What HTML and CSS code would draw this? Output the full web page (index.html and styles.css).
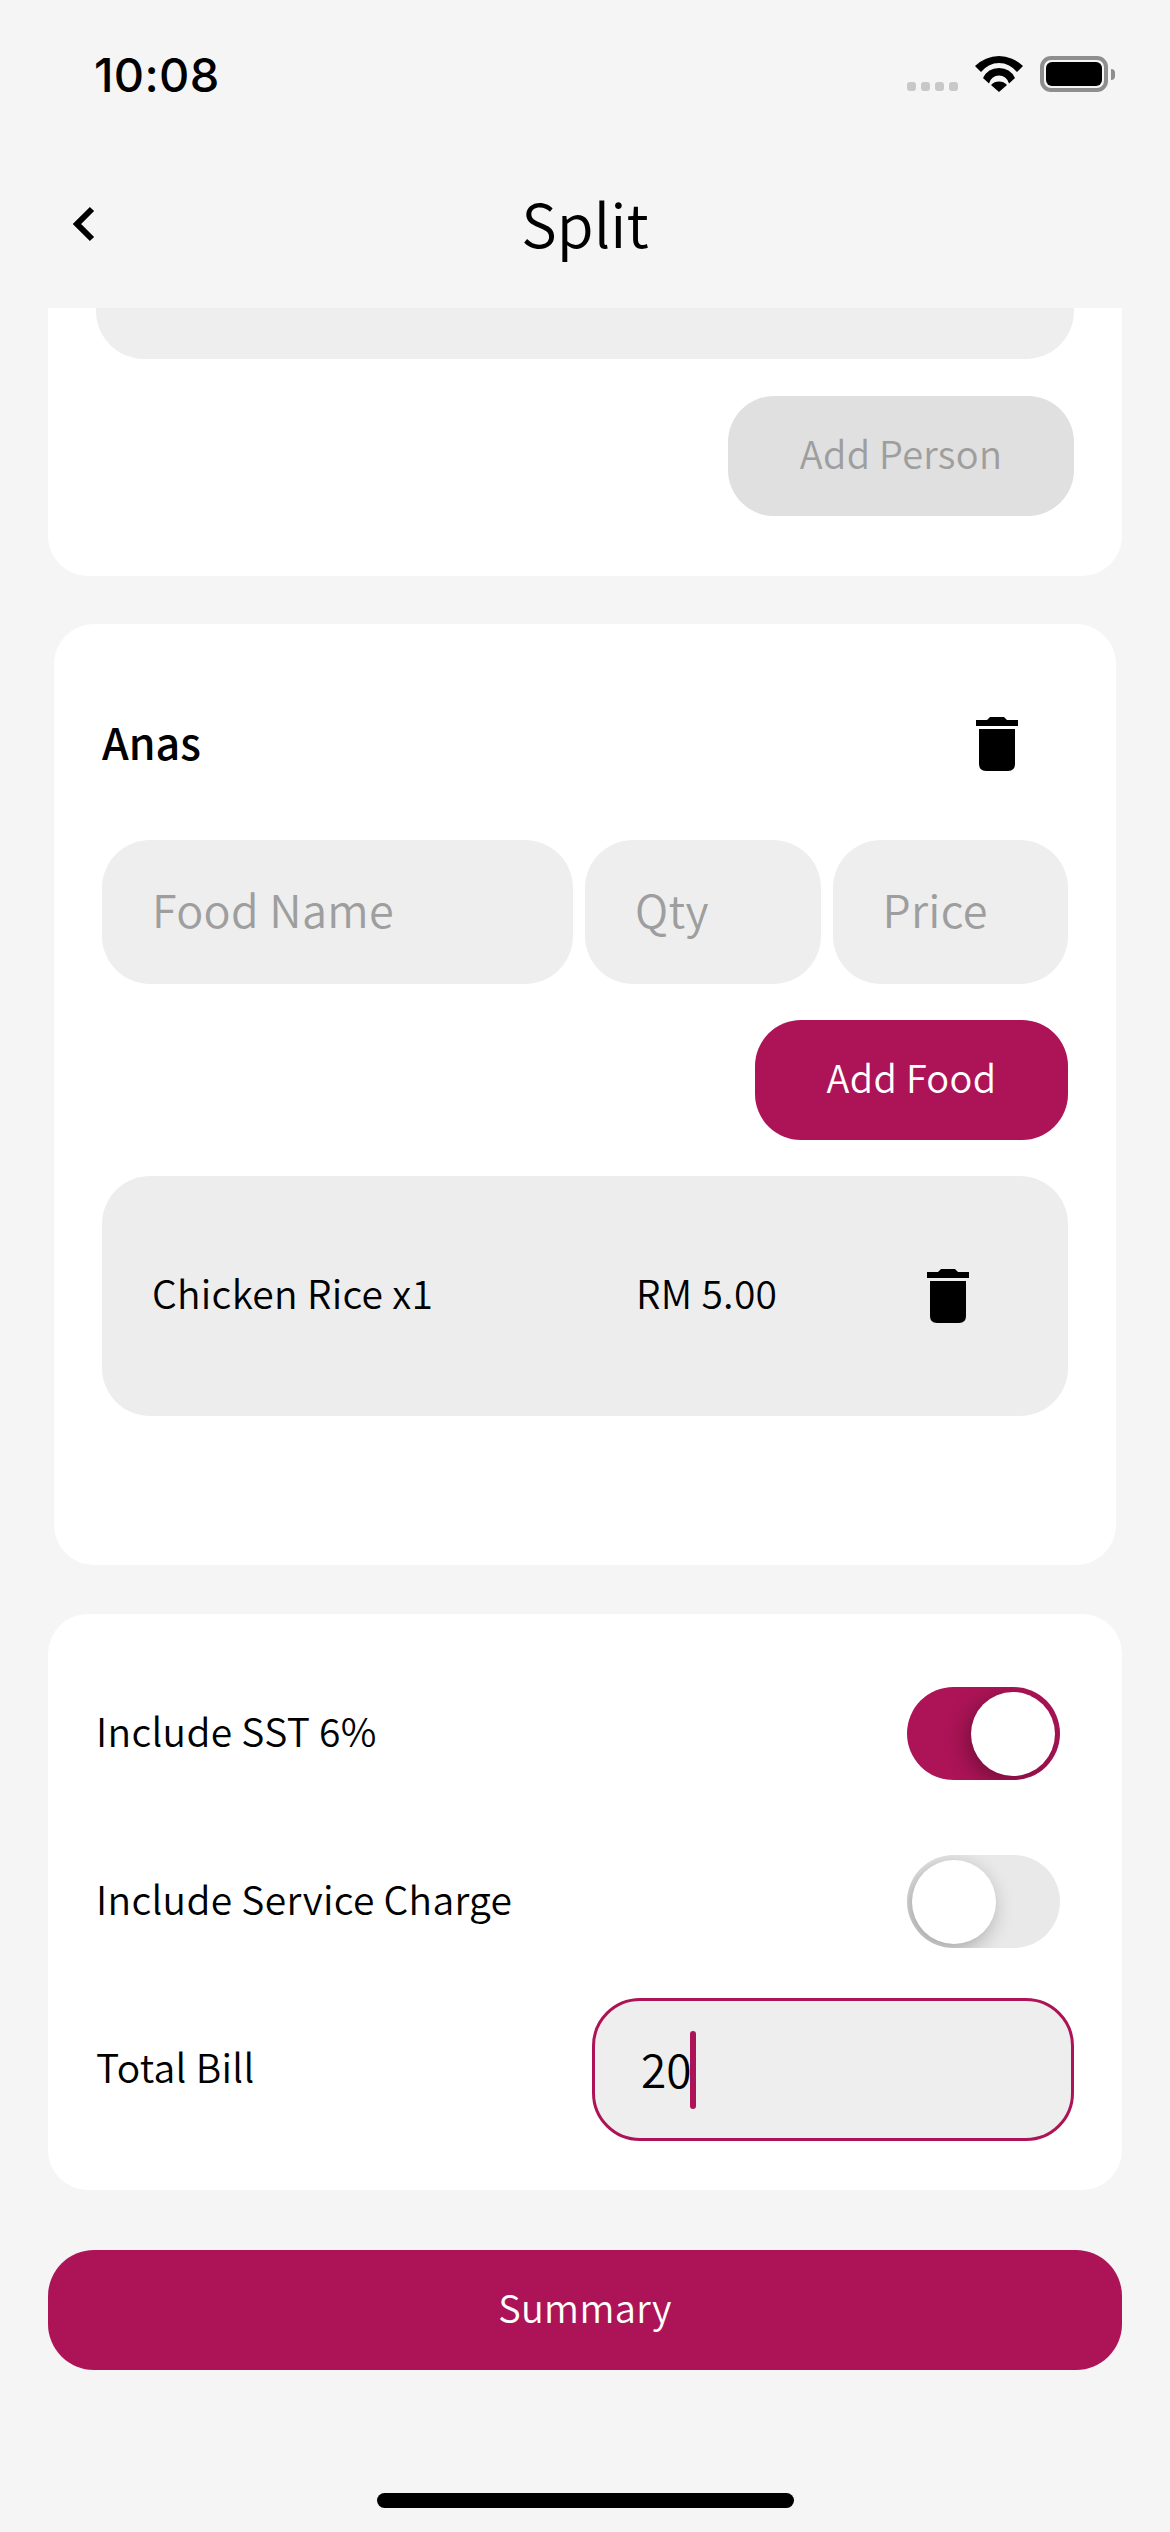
FILE: index.html
```html
<!DOCTYPE html>
<html lang="en">
<head>
  <meta charset="UTF-8">
  <meta name="viewport" content="width=device-width, initial-scale=1.0">
  <title>Split</title>
  <link rel="stylesheet" href="styles.css">
</head>
<body>
  <div class="screen">
    <div class="status-bar">
      <span class="time">10:08</span>
      <div class="status-icons">
        <div class="signal"><i></i><i></i><i></i><i></i></div>
        <svg class="wifi" viewBox="0 0 48 37" width="48" height="37">
          <path d="M0 11A34 34 0 0 1 48 11L42 17A22.5 22.5 0 0 0 6 17Z"/>
          <path d="M8 23A17.8 17.8 0 0 1 40 23L34 28.5A10.25 10.25 0 0 0 14 28.5Z"/>
          <path d="M16 30A11 11 0 0 1 32 30L24 37Z"/>
        </svg>
        <div class="battery"><div class="battery-fill"></div></div>
        <div class="battery-nub"></div>
      </div>
    </div>

    <div class="nav-bar">
      <svg class="back" viewBox="0 0 24 36" width="24" height="36">
        <path d="M21 3L6 18L21 33" fill="none" stroke="#000" stroke-width="6"/>
      </svg>
      <h1>Split</h1>
    </div>

    <div class="card card-clipped">
      <div class="person-field"></div>
      <button class="btn btn-disabled add-person">Add Person</button>
    </div>

    <div class="card card-person">
      <div class="person-head">
        <span class="person-name">Anas</span>
        <svg class="trash" viewBox="0 0 42 54" width="42" height="54">
          <path d="M0 3H11L14 0H28L31 3H42V9H0Z"/>
          <path d="M3 12H39V47Q39 54 32 54H10Q3 54 3 47Z"/>
        </svg>
      </div>
      <div class="food-inputs">
        <div class="field">Food Name</div>
        <div class="field">Qty</div>
        <div class="field">Price</div>
      </div>
      <button class="btn btn-primary add-food">Add Food</button>
      <div class="food-row">
        <span>Chicken Rice x1</span>
        <span>RM 5.00</span>
        <svg class="trash" viewBox="0 0 42 54" width="42" height="54">
          <path d="M0 3H11L14 0H28L31 3H42V9H0Z"/>
          <path d="M3 12H39V47Q39 54 32 54H10Q3 54 3 47Z"/>
        </svg>
      </div>
    </div>

    <div class="card card-options">
      <div class="option option-sst">
        <span>Include SST 6%</span>
        <div class="switch switch-on"><div class="knob"></div></div>
      </div>
      <div class="option option-service">
        <span>Include Service Charge</span>
        <div class="switch"><div class="knob"></div></div>
      </div>
      <div class="option">
        <span>Total Bill</span>
        <div class="bill-input"><span>20</span><i class="caret"></i></div>
      </div>
    </div>

    <button class="btn btn-primary summary">Summary</button>
    <div class="home-bar"></div>
  </div>
</body>
</html>
```

FILE: styles.css
```css
body {
  margin: 0;
  background: #f5f5f5;
  font-family: "Noto Sans CJK SC", "Noto Sans", sans-serif;
  font-weight: 350;
  color: #000;
}

.screen {
  width: 1170px;
  height: 2532px;
  display: flex;
  flex-direction: column;
  overflow: hidden;
}

.status-bar {
  height: 146px;
  display: flex;
  justify-content: space-between;
  align-items: center;
  padding: 0 55px 0 94px;
}

.time {
  padding-top: 2px;
  font-family: Inter, sans-serif;
  font-size: 47px;
  font-weight: 500;
  letter-spacing: 0.3px;
}

.status-icons {
  display: flex;
  align-items: flex-end;
  height: 37px;
}

.signal {
  display: flex;
  gap: 5px;
  margin-right: 17px;
  margin-bottom: 1px;
}

.signal i {
  width: 9px;
  height: 9px;
  border-radius: 3px;
  background: #c8c8c8;
}

.wifi {
  margin-right: 17px;
}

.battery {
  box-sizing: border-box;
  width: 68px;
  height: 36px;
  padding: 2px;
  border: 4px solid #8e8e8e;
  border-radius: 11px;
}

.battery-fill {
  height: 100%;
  background: #000;
  border-radius: 6px;
}

.battery-nub {
  width: 4px;
  height: 11px;
  margin: 0 0 12px 3px;
  background: #8e8e8e;
  border-radius: 0 4px 4px 0;
}

.nav-bar {
  height: 162px;
  display: grid;
  grid-template-columns: 1fr auto 1fr;
  align-items: center;
  padding: 0 71px 6px;
  box-sizing: border-box;
}

.nav-bar h1 {
  margin: 0;
  padding-bottom: 4px;
  font-size: 60px;
  font-weight: 350;
  line-height: 1;
}

.card {
  background: #fff;
  border-radius: 40px;
}

.card-clipped {
  margin: 0 48px;
  padding: 0 48px 60px;
  border-radius: 0 0 40px 40px;
  display: flex;
  flex-direction: column;
}

.person-field {
  height: 51px;
  background: #eeeeee;
  border-radius: 0 0 48px 48px;
}

.btn {
  border: none;
  display: block;
  height: 120px;
  padding: 0 0 8px;
  font-family: inherit;
  font-weight: 350;
  font-size: 38px;
  letter-spacing: 0.3px;
}

.btn-primary {
  background: #ad1457;
  color: #fff;
}

.btn-disabled {
  background: #e0e0e0;
  color: #9e9e9e;
}

.add-person {
  width: 346px;
  align-self: flex-end;
  margin-top: 37px;
  border-radius: 46px;
}

.card-person {
  margin: 48px 54px 0;
  padding: 72px 48px 0;
  height: 941px;
  box-sizing: border-box;
  display: flex;
  flex-direction: column;
}

.person-head {
  height: 96px;
  margin-bottom: 48px;
  padding-right: 50px;
  display: flex;
  justify-content: space-between;
  align-items: center;
}

.person-name {
  padding-bottom: 6px;
  font-size: 43px;
  font-weight: 500;
}

.food-inputs {
  display: grid;
  grid-template-columns: 2fr 1fr 1fr;
  gap: 12px;
}

.field {
  box-sizing: border-box;
  height: 144px;
  display: flex;
  align-items: center;
  padding: 0 0 8px 50px;
  background: #eeeeee;
  border-radius: 48px;
  font-size: 45px;
  letter-spacing: 0.3px;
  color: #9e9e9e;
}

.add-food {
  width: 313px;
  align-self: flex-end;
  margin-top: 36px;
  border-radius: 46px;
}

.food-row {
  height: 240px;
  margin-top: 36px;
  padding-left: 50px;
  display: grid;
  grid-template-columns: 484px 291px 42px;
  align-items: center;
  background: #ededed;
  border-radius: 48px;
  font-size: 39px;
  letter-spacing: 0.3px;
}

.food-row span {
  padding-bottom: 8px;
}

.trash {
  display: block;
}

.card-options {
  margin: 49px 48px 0;
  padding: 73px 48px 49px;
  font-size: 39px;
  letter-spacing: 0.3px;
}

.option {
  display: flex;
  justify-content: space-between;
  align-items: center;
}

.option > span {
  padding-bottom: 8px;
}

.option-sst {
  margin-bottom: 75px;
}

.option-service {
  margin-bottom: 50px;
}

.switch {
  width: 153px;
  height: 93px;
  margin-right: 14px;
  padding: 5px;
  box-sizing: border-box;
  display: flex;
  border-radius: 47px;
  background: #e9e9e9;
  overflow: hidden;
}

.switch-on {
  justify-content: flex-end;
  background: #ad1457;
}

.knob {
  width: 84px;
  height: 84px;
  border-radius: 50%;
  background: #fff;
  box-shadow: -5px 6px 22px rgba(0, 0, 0, 0.32);
}

.bill-input {
  box-sizing: border-box;
  width: 482px;
  height: 143px;
  padding: 0 0 0 46px;
  display: flex;
  align-items: center;
  background: #eeeeee;
  border: 3px solid #ad1457;
  border-radius: 48px;
  font-size: 46px;
  letter-spacing: 0;
}

.bill-input span {
  padding-bottom: 4px;
}

.caret {
  width: 6px;
  height: 78px;
  margin-left: -2px;
  background: #ad1457;
  border-radius: 3px;
}

.summary {
  flex: none;
  width: 1074px;
  margin: 60px 48px 0;
  border-radius: 46px;
}

.home-bar {
  width: 417px;
  height: 15px;
  margin: 123px auto 0;
  background: #000;
  border-radius: 8px;
}
```
